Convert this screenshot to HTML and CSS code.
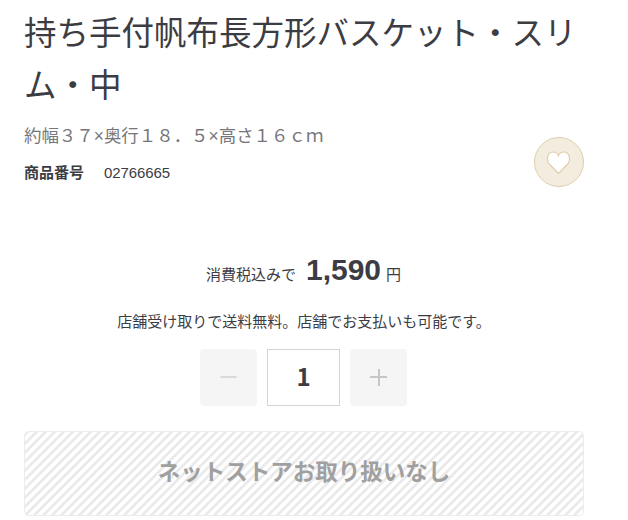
FILE: index.html
```html
<!DOCTYPE html>
<html lang="ja">
<head>
<meta charset="UTF-8" />
<meta name="viewport" content="width=device-width, initial-scale=1" />
<title>持ち手付帆布長方形バスケット・スリム・中</title>
<link rel="stylesheet" href="styles.css">
</head>
<body>
<main class="product">
  <h1 class="product-name">持ち手付帆布長方形バスケット・スリム・中</h1>

  <div class="product-meta">
    <div class="meta-text">
      <p class="size">約幅３７×奥行１８．５×高さ１６ｃｍ</p>
      <p class="code"><strong>商品番号</strong><span>02766665</span></p>
    </div>
    <button class="favorite" aria-label="お気に入り">
      <svg width="24" height="24" viewBox="0 0 24 24"><path d="M11.500 23.500L2.300 14C-.9 10.500 .2 2 6 2C8.700 2 10.700 3.200 11.500 5.700C12.300 3.200 14.300 2 17 2C22.800 2 23.900 10.500 20.700 14Z" /></svg>
    </button>
  </div>

  <p class="price"><span>消費税込みで</span><strong>1,590</strong><span>円</span></p>
  <p class="shipping">店舗受け取りで送料無料。店舗でお支払いも可能です。</p>

  <div class="quantity">
    <button class="qty-btn minus" aria-label="減らす"><svg width="17" height="17" viewBox="0 0 17 17"><path d="M.5 8H16.500" /></svg></button>
    <input class="qty-input" type="text" value="1" />
    <button class="qty-btn" aria-label="増やす"><svg width="17" height="17" viewBox="0 0 17 17"><path d="M0 8H17M9 0V17" /></svg></button>
  </div>

  <button class="cart" disabled>ネットストアお取り扱いなし</button>
</main>
</body>
</html>
```
FILE: styles.css
```css
* { box-sizing: border-box; }
body { margin: 0; background: #fff; color: #3c3c43; font-family: "Liberation Sans", "Noto Sans CJK JP", sans-serif; }
h1, p { margin: 0; }
button { padding: 0; border: none; font-family: inherit; }
.product { width: 560px; margin: 0 0 0 24px; padding-top: 8px; }
.product-name { font-size: 32.5px; font-weight: 400; line-height: 52px; }
.product-meta { display: flex; justify-content: space-between; align-items: flex-end; height: 75px; }
.meta-text { align-self: flex-start; padding-top: 10px; }
.size { font-size: 17.45px; line-height: 28px; color: #76767b; }
.code { display: flex; gap: 20px; margin-top: 11px; font-size: 15px; line-height: 24px; }
.code span { letter-spacing: -0.1px; }
.favorite { display: flex; align-items: center; justify-content: center; width: 50px; height: 50px; border: 1px solid #e0ceaa; border-radius: 50%; background: #f3eddf; }
.favorite path { fill: #fff; stroke: #e0ceaa; stroke-width: 1.2; }
.price { display: flex; justify-content: center; align-items: baseline; margin-top: 63px; margin-right: 1px; font-size: 15px; line-height: 40px; }
.price strong { margin: 0 5px 0 10px; font-size: 30px; }
.shipping { margin-top: 15px; font-size: 15px; line-height: 24px; text-align: center; }
.quantity { display: flex; justify-content: center; gap: 10px; margin: 15px 2px 0 0; }
.qty-btn { display: flex; align-items: center; justify-content: center; width: 57px; height: 57px; border-radius: 4px; background: #f5f5f5; }
.qty-btn path { stroke: #c6c6c6; stroke-width: 2; fill: none; }
.minus path { stroke: #d9d9d9; }
.qty-input { width: 73px; height: 57px; padding: 0 0 4px 1px; border: 1px solid #d4d4d4; color: #3c3c43; font-family: "Noto Sans CJK JP", sans-serif; font-size: 24px; font-weight: 700; text-align: center; }
.cart { display: block; width: 560px; height: 85px; margin-top: 25px; padding-bottom: 7px; border: 1px solid #ececec; border-radius: 5px; background: linear-gradient(135deg, #ebebeb 25%, #fff 25% 50%, #ebebeb 50% 75%, #fff 75%) 0 0 / 9px 9px; color: #a0a0a0; font-size: 22.5px; font-weight: 700; }
```
